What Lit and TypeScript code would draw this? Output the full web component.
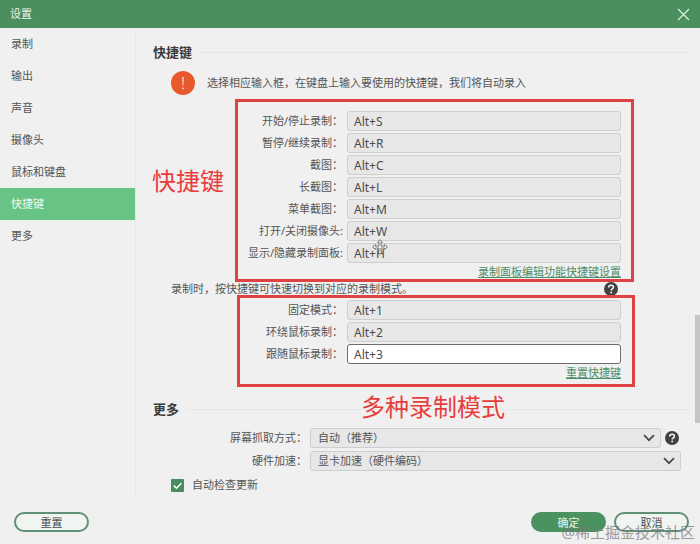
import { LitElement, html, css, svg } from "lit";
import { customElement, property, state } from "lit/decorators.js";
import { classMap } from "lit/directives/class-map.js";

interface Shortcut {
  id: string;
  label: string;
  keys: string;
}

const NAV = ["录制", "输出", "声音", "摄像头", "鼠标和键盘", "快捷键", "更多"];

const ACTIONS: Shortcut[] = [
  { id: "record", label: "开始/停止录制：", keys: "Alt+S" },
  { id: "pause", label: "暂停/继续录制：", keys: "Alt+R" },
  { id: "shot", label: "截图：", keys: "Alt+C" },
  { id: "long-shot", label: "长截图：", keys: "Alt+L" },
  { id: "menu-shot", label: "菜单截图：", keys: "Alt+M" },
  { id: "camera", label: "打开/关闭摄像头:", keys: "Alt+W" },
  { id: "panel", label: "显示/隐藏录制面板:", keys: "Alt+H" },
];

const MODES: Shortcut[] = [
  { id: "fixed", label: "固定模式：", keys: "Alt+1" },
  { id: "around", label: "环绕鼠标录制：", keys: "Alt+2" },
  { id: "follow", label: "跟随鼠标录制：", keys: "Alt+3" },
];

@customElement("help-button")
export class HelpButton extends LitElement {
  static styles = css`
    :host {
      display: flex;
    }
    .help {
      display: flex;
      padding: 0;
      border: 0;
      background: none;
    }
  `;

  render() {
    return html`<button class="help" type="button" aria-label="帮助">
      <svg width="14" height="14" viewBox="0 0 14 14">
        <circle cx="7" cy="7" r="7" fill="#414141" />
        <path d="M4.7 5.5C4.7 4 5.7 3.2 7.1 3.2s2.3.8 2.3 2c0 1.7-2.2 1.7-2.2 3.3" fill="none" stroke="#f4f4f4" stroke-width="1.6" />
        <circle cx="7.2" cy="10.5" r="1" fill="#f4f4f4" />
      </svg>
    </button>`;
  }
}

@customElement("shortcut-row")
export class ShortcutRow extends LitElement {
  @property({ attribute: false }) item!: Shortcut;
  @property({ type: Boolean }) active = false;

  static styles = css`
    :host {
      display: flex;
      align-items: center;
      height: 20px;
    }
    .label {
      width: 207px;
      flex: none;
      text-align: right;
      white-space: nowrap;
    }
    .keys {
      flex: 1;
      min-width: 0;
      height: 20px;
      margin-left: 4px;
      padding: 0 6px;
      box-sizing: border-box;
      border: 1px solid #cdcecd;
      border-radius: 3px;
      background: #e7e7e7;
      color: #4c4c4c;
      font: 12px "Noto Sans", "Noto Sans CJK SC", sans-serif;
      outline: none;
    }
    .keys.active {
      border-color: #6c6c6c;
      background: #fff;
    }
  `;

  render() {
    return html`
      <label class="label" for=${this.item.id}>${this.item.label}</label>
      <input
        class=${classMap({ keys: true, active: this.active })}
        id=${this.item.id}
        type="text"
        readonly
        .value=${this.item.keys}
      />
    `;
  }
}

@customElement("app-root")
export class AppRoot extends LitElement {
  @state() private section = "快捷键";

  static styles = css`
    :host {
      display: flex;
      flex-direction: column;
      min-height: 100vh;
      position: relative;
      background: #f0f0f0;
      color: #555;
      font: 11px/16px "Noto Sans", "Noto Sans CJK SC", sans-serif;
    }
    .titlebar {
      display: flex;
      align-items: center;
      justify-content: space-between;
      height: 28px;
      padding: 0 10px;
      background: #4c8f5f;
      color: #e9f5ec;
    }
    .close {
      display: flex;
      padding: 0;
      border: 0;
      background: none;
    }
    .body {
      flex: 1;
      display: flex;
    }
    .nav {
      width: 135px;
      flex: none;
      display: flex;
      flex-direction: column;
      border-right: 1px solid #e8e9e8;
    }
    .nav-item {
      height: 32px;
      padding: 0 11px;
      border: 0;
      background: none;
      color: inherit;
      font: inherit;
      text-align: left;
    }
    .nav-item.current {
      background: #68c484;
      color: #effaf2;
    }
    .content {
      position: relative;
      flex: 1;
      min-width: 0;
      padding-top: 14px;
    }
    .thumb {
      position: absolute;
      top: 61%;
      right: 0;
      width: 5px;
      height: 23%;
      background: #c5c5c5;
    }
    .heading {
      display: flex;
      align-items: center;
      gap: 8px;
      height: 20px;
      margin: 0;
      padding: 0 8px 0 17px;
      font-size: 13px;
      font-weight: 700;
      color: #3c3c3c;
    }
    .heading::after {
      content: "";
      flex: 1;
      height: 1px;
      background: #e6e7e6;
    }
    .heading.more {
      margin-top: 17px;
    }
    .notice {
      display: flex;
      align-items: center;
      gap: 12px;
      height: 24px;
      margin: 9px 0 16px;
      padding-left: 35px;
    }
    .group {
      position: relative;
    }
    .rows {
      display: flex;
      flex-direction: column;
      gap: 2px;
      padding-right: 79px;
    }
    .link-row {
      display: flex;
      align-items: center;
      justify-content: flex-end;
      height: 18px;
      padding-right: 79px;
    }
    .link {
      color: #4d8c69;
    }
    .hint {
      display: flex;
      align-items: center;
      justify-content: space-between;
      height: 16px;
      margin-bottom: 3px;
      padding: 0 82px 0 35px;
    }
    .frame {
      position: absolute;
      border: 3px solid #df4242;
      pointer-events: none;
    }
    .frame.actions {
      inset: -12px 66px -1px 99px;
    }
    .frame.modes {
      inset: -5px 65px -5px 101px;
    }
    .note {
      position: absolute;
      color: #e83d3d;
      font-size: 24px;
      line-height: 32px;
      white-space: nowrap;
    }
    .note.actions {
      top: 54px;
      left: 16px;
    }
    .note.modes {
      top: 91px;
      left: 225px;
    }
    .cursor {
      position: absolute;
      top: 128px;
      left: 236px;
    }
    .options {
      display: flex;
      flex-direction: column;
      gap: 3px;
      margin-top: 9px;
      padding-right: 19px;
    }
    .option {
      display: flex;
      align-items: center;
      height: 20px;
    }
    .option-label {
      width: 171px;
      flex: none;
      text-align: right;
    }
    .picker {
      position: relative;
      flex: 1;
      display: flex;
      margin-left: 3px;
    }
    .select {
      flex: 1;
      height: 20px;
      padding: 0 7px;
      appearance: none;
      border: 1px solid #cdcecd;
      border-radius: 3px;
      background: #e7e7e7;
      color: inherit;
      font: inherit;
    }
    .chevron {
      position: absolute;
      top: 6px;
      right: 6px;
      pointer-events: none;
    }
    .option-help {
      margin: 0 2px 0 4px;
    }
    .check {
      display: flex;
      align-items: center;
      gap: 8px;
      height: 16px;
      margin: 6px 0 5px;
      padding-left: 35px;
    }
    .box {
      display: grid;
      place-items: center;
    }
    .tick,
    .mark {
      grid-area: 1 / 1;
    }
    .tick {
      width: 13px;
      height: 13px;
      margin: 0;
      appearance: none;
      border-radius: 1px;
      background: #4a8b5f;
    }
    .mark {
      pointer-events: none;
    }
    .footer {
      display: flex;
      align-items: center;
      gap: 8px;
      height: 46px;
      padding: 0 11px 0 14px;
      box-sizing: border-box;
      border-top: 1px solid #ececec;
    }
    .button {
      width: 75px;
      height: 20px;
      padding: 0;
      border: 2px solid #609176;
      border-radius: 10px;
      background: #f1f5f2;
      color: #4c4c4c;
      font: 11px/16px "Noto Sans CJK SC", sans-serif;
    }
    .button.reset {
      margin-right: auto;
    }
    .button.primary {
      border-color: #4b9261;
      background: #4b9261;
      color: #e6f4ea;
    }
    .watermark {
      position: absolute;
      right: 5px;
      bottom: 2px;
      color: #777;
      opacity: 0.7;
      font-size: 15px;
      line-height: 20px;
      pointer-events: none;
    }
  `;

  private chevron() {
    return html`<svg class="chevron" width="12" height="8" viewBox="0 0 12 8">
      ${svg`<path d="M1 1.2 6 6.2 11 1.2" fill="none" stroke="#4a4a4a" stroke-width="1.7" />`}
    </svg>`;
  }

  render() {
    return html`
      <header class="titlebar">
        <span>设置</span>
        <button class="close" type="button" aria-label="关闭">
          <svg width="13" height="13" viewBox="0 0 13 13">
            <path d="M1 1 12 12M12 1 1 12" stroke="#d9f2df" stroke-width="1.2" />
          </svg>
        </button>
      </header>

      <div class="body">
        <nav class="nav">
          ${NAV.map(
            (name) => html`<button
              type="button"
              class=${classMap({ "nav-item": true, current: name === this.section })}
              @click=${() => (this.section = name)}
            >${name}</button>`
          )}
        </nav>

        <main class="content">
          <h2 class="heading">快捷键</h2>
          <div class="notice">
            <svg width="24" height="24" viewBox="0 0 24 24">
              <circle cx="12" cy="12" r="12" fill="#e85a2c" />
              <path d="M11.2 6h1.6l-.4 8.6h-.8z" fill="#fde3d8" />
              <circle cx="12" cy="17.3" r="0.9" fill="#fde3d8" />
            </svg>
            <span>选择相应输入框，在键盘上输入要使用的快捷键，我们将自动录入</span>
          </div>

          <section class="group">
            <div class="rows">
              ${ACTIONS.map((item) => html`<shortcut-row .item=${item}></shortcut-row>`)}
            </div>
            <div class="link-row"><a class="link" href="#panel">录制面板编辑功能快捷键设置</a></div>
            <svg class="cursor" width="16" height="16" viewBox="0 0 16 16">
              <path
                d="M8 .7 10.3 3.3H9v3.7h3.7V5.7L15.3 8l-2.6 2.3V9H9v3.7h1.3L8 15.3 5.7 12.7H7V9H3.3v1.3L.7 8l2.6-2.3V7H7V3.3H5.7z"
                fill="#f5f5f5"
                stroke="#666"
                stroke-width="0.9"
              />
            </svg>
            <div class="frame actions"></div>
            <span class="note actions">快捷键</span>
          </section>

          <div class="hint">
            <span>录制时，按快捷键可快速切换到对应的录制模式。</span>
            <help-button></help-button>
          </div>

          <section class="group">
            <div class="rows">
              ${MODES.map(
                (item) => html`<shortcut-row .item=${item} ?active=${item.id === "follow"}></shortcut-row>`
              )}
            </div>
            <div class="link-row"><a class="link" href="#reset">重置快捷键</a></div>
            <div class="frame modes"></div>
            <span class="note modes">多种录制模式</span>
          </section>

          <h2 class="heading more">更多</h2>
          <div class="options">
            <div class="option">
              <label class="option-label" for="capture">屏幕抓取方式：</label>
              <div class="picker">
                <select class="select" id="capture"><option>自动（推荐）</option></select>
                ${this.chevron()}
              </div>
              <help-button class="option-help"></help-button>
            </div>
            <div class="option">
              <label class="option-label" for="hardware">硬件加速：</label>
              <div class="picker">
                <select class="select" id="hardware"><option>显卡加速（硬件编码）</option></select>
                ${this.chevron()}
              </div>
            </div>
          </div>
          <label class="check">
            <span class="box">
              <input class="tick" type="checkbox" checked />
              <svg class="mark" width="13" height="13" viewBox="0 0 13 13">
                <path d="M2.8 6.6 5.5 9.2 10.4 4.2" fill="none" stroke="#fff" stroke-width="1.5" />
              </svg>
            </span>
            <span>自动检查更新</span>
          </label>
          <div class="thumb"></div>
        </main>
      </div>

      <footer class="footer">
        <button class="button reset" type="button">重置</button>
        <button class="button primary" type="button">确定</button>
        <button class="button" type="button">取消</button>
      </footer>
      <span class="watermark">@稀土掘金技术社区</span>
    `;
  }
}
